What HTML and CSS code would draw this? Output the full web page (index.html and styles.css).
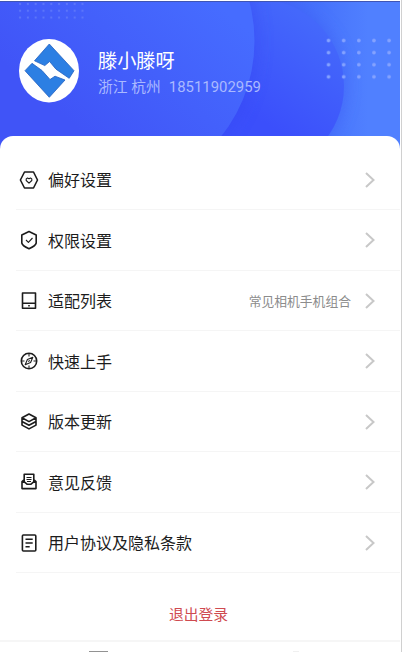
FILE: index.html
```html
<!DOCTYPE html>
<html lang="zh-CN">
<head>
<meta charset="utf-8">
<title>我的</title>
<link rel="stylesheet" href="styles.css">
</head>
<body>
<main class="app">
  <header class="profile">
    <svg class="backdrop" width="400" height="152" viewBox="0 0 400 152" aria-hidden="true">
      <defs>
        <linearGradient id="sky" x1="0" x2="1" y1="0" y2="0"><stop offset=".55" stop-color="#4059f8"/><stop offset=".78" stop-color="#4570fb"/><stop offset=".92" stop-color="#5080ff"/></linearGradient>
        <linearGradient id="c1" gradientUnits="userSpaceOnUse" x1="90" y1="140" x2="215" y2="0"><stop offset="0" stop-color="#4054f7"/><stop offset="1" stop-color="#466cff"/></linearGradient>
        <linearGradient id="c2" gradientUnits="userSpaceOnUse" x1="262" y1="120" x2="325" y2="30"><stop offset="0" stop-color="#3b4ffb"/><stop offset="1" stop-color="#4468fb"/></linearGradient>
        <pattern id="dots1" x="16.2" y="-1" width="7.8" height="6.8" patternUnits="userSpaceOnUse"><circle cx="3.9" cy="3.9" r="1.1" fill="#6079fa"/></pattern>
        <pattern id="dots2" x="321" y="33.5" width="15.15" height="12.1" patternUnits="userSpaceOnUse"><circle cx="7.5" cy="6" r="1.8" fill="#84a2ff"/></pattern>
        <filter id="soft" x="-20%" y="-20%" width="140%" height="140%"><feGaussianBlur stdDeviation="8"/></filter>
      </defs>
      <rect width="400" height="152" fill="url(#sky)"/>
      <circle cx="257" cy="85" r="88" fill="#3c5cf4" opacity=".55" filter="url(#soft)"/>
      <circle cx="257" cy="85" r="87" fill="url(#c2)"/>
      <circle cx="101" cy="40" r="156" fill="#344af2" opacity=".5" filter="url(#soft)"/>
      <circle cx="101" cy="40" r="153.500" fill="url(#c1)"/>
      <rect x="16.200" y="0" width="70.200" height="19.400" fill="url(#dots1)"/>
      <rect x="321" y="33.500" width="75.750" height="48.400" fill="url(#dots2)"/>
      <rect width="400" height="1" fill="#3f55b4"/>
    </svg>
    <svg class="avatar" width="60" height="64" viewBox="19 39 60 64" aria-hidden="true">
      <ellipse cx="49" cy="70.700" rx="30" ry="31.700" fill="#fff"/>
      <g fill="#2c7fe3" stroke="#225fc0" stroke-width=".8" stroke-linejoin="round">
        <path d="M49.300 44 74 70.700 69.200 78.300 56 69.200 49.600 61.500 44.800 65.600 34.500 60.800Z"/>
        <path d="M32 63.300 25 70.700 49.300 97.300 65 80 55 76.200 50 79.500 42 70.500Z"/>
      </g>
    </svg>
    <div class="who">
      <h1 class="name">滕小滕呀</h1>
      <p class="meta"><span>浙江 杭州</span><span class="phone">18511902959</span></p>
    </div>
  </header>

  <section class="panel">
    <ul class="menu">
      <li class="row">
        <svg class="icon" viewBox="0 0 18 18"><path d="M4.500 1h9L17.500 9l-4 8h-9L.4 9Z"/><path class="thin" d="M9 12.200 6.200 9.500V7.900L7.500 7 9 7.800 10.500 7l1.300.9v1.600Z"/></svg>
        <span class="label">偏好设置</span>
        <svg class="chevron" viewBox="0 0 10 16"><path d="M1 1 8.500 8 1 15"/></svg>
      </li>
      <li class="row">
        <svg class="icon" viewBox="0 0 18 18"><path d="M9 .5 16.200 4V12Q15.700 14.800 9 17.800 2.300 14.800 1.800 12V4Z"/><path class="thin" d="m6 9 2.400 2.300L12.500 7"/></svg>
        <span class="label">权限设置</span>
        <svg class="chevron" viewBox="0 0 10 16"><path d="M1 1 8.500 8 1 15"/></svg>
      </li>
      <li class="row">
        <svg class="icon" viewBox="0 0 18 18"><path d="M2.500 1h13v15.200h-13ZM2.500 11.300h13M8.200 13.800h1.600"/></svg>
        <span class="label">适配列表</span>
        <span class="note">常见相机手机组合</span>
        <svg class="chevron" viewBox="0 0 10 16"><path d="M1 1 8.500 8 1 15"/></svg>
      </li>
      <li class="row">
        <svg class="icon" viewBox="0 0 18 18"><circle cx="9" cy="9" r="7.700"/><path class="thin" d="M9 1.500v3M9 13.500v3M1.500 9h3M13.500 9h3M12.800 5.200 10.600 10.500 5.200 12.800 7.400 7.500ZM8.300 9.700l1.400-1.400"/></svg>
        <span class="label">快速上手</span>
        <svg class="chevron" viewBox="0 0 10 16"><path d="M1 1 8.500 8 1 15"/></svg>
      </li>
      <li class="row">
        <svg class="icon" viewBox="0 0 18 18"><path d="M9 1 16 4.800 9 8.600 2 4.800ZM2 5v3.500l7 3.800 7-3.800V5M2 8.500v3.600l7 3.800 7-3.800V8.500"/></svg>
        <span class="label">版本更新</span>
        <svg class="chevron" viewBox="0 0 10 16"><path d="M1 1 8.500 8 1 15"/></svg>
      </li>
      <li class="row">
        <svg class="icon" viewBox="0 0 18 18"><path d="M4.200 9.500V1.300h9.600v8.200M4.200 6.700 2 8.600v7h14v-7l-2.200-1.900M2 9.200h2.600L7 11.200h4l2.400-2H16"/><path class="thin" d="M6.500 4.500h5M6.500 6.500h5M7 8.500h4"/></svg>
        <span class="label">意见反馈</span>
        <svg class="chevron" viewBox="0 0 10 16"><path d="M1 1 8.500 8 1 15"/></svg>
      </li>
      <li class="row">
        <svg class="icon" viewBox="0 0 18 18"><rect x="2.400" y="1" width="13.400" height="16" rx="1"/><path d="M5.500 5.200h7.200M5.500 9h7.200M5.500 12.800h4.200"/></svg>
        <span class="label">用户协议及隐私条款</span>
        <svg class="chevron" viewBox="0 0 10 16"><path d="M1 1 8.500 8 1 15"/></svg>
      </li>
    </ul>
    <button class="logout" type="button">退出登录</button>
  </section>
  <nav class="tabbar"><i class="tab tab-main"></i><i class="tab tab-faint"></i></nav>
</main>
</body>
</html>
```
FILE: styles.css
```css
* { box-sizing: border-box; }

body {
  margin: 0;
  background: #fff;
  color: #1c1c1c;
  font-family: Roboto, "Noto Sans CJK SC", sans-serif;
}

.app {
  display: flex;
  flex-direction: column;
  width: 402px;
  height: 652px;
  overflow: hidden;
  border-right: 1px solid #d0d0d0;
  padding: 1px 1px 0 0;
}

.profile {
  position: relative;
  display: flex;
  flex: none;
  height: 152px;
  padding: 39px 0 0 19px;
  margin-bottom: -17.500px;
}

.backdrop {
  position: absolute;
  inset: 0;
}

.avatar {
  position: relative;
  flex: none;
  margin-top: -1px;
}

.who {
  position: relative;
  margin: 8px 0 0 19px;
}

.name {
  margin: 0;
  color: #fff;
  font-size: 19.2px;
  font-weight: 400;
  line-height: 27px;
}

.meta {
  display: flex;
  gap: 8px;
  margin: 0;
  color: #aab9ff;
  font-size: 14.8px;
  line-height: 24px;
  white-space: nowrap;
}

.phone { font-size: 14.900px; }

.panel {
  position: relative;
  flex: none;
  height: 504.500px;
  padding-top: 14px;
  border-radius: 13px 13px 0 0;
  background: #fff;
}

.menu {
  margin: 0;
  padding: 0 0 0 16px;
  list-style: none;
}

.row {
  display: flex;
  align-items: center;
  height: 60.500px;
  padding: 1px 25px 0 4px;
  border-bottom: 1px solid #f5f5f5;
}

.icon {
  flex: none;
  width: 18px;
  height: 18px;
  margin-right: 10px;
  overflow: visible;
  fill: none;
  stroke: #1c1c1c;
  stroke-width: 1.6;
  stroke-linejoin: round;
}

.thin { stroke-width: 1.1; }

.label {
  flex: 1;
  padding-top: 3px;
  font-size: 16px;
  line-height: 24px;
}

.note {
  margin-right: 14px;
  color: #8c8c8c;
  font-size: 12.800px;
}

.chevron {
  flex: none;
  width: 10px;
  height: 16px;
  fill: none;
  stroke: #c8c8c8;
  stroke-width: 2;
}

.logout {
  display: block;
  margin: 30px auto 0;
  padding: 0 3px 0 0;
  border: 0;
  background: none;
  color: #cf4a50;
  font: inherit;
  font-size: 14.800px;
  line-height: 24px;
}

.tabbar {
  position: relative;
  display: flex;
  flex: none;
  height: 12px;
  padding: 9px 0 0 89px;
  border-top: 2px solid #f6f6f6;
  background: #fff;
}

.tab { height: 1px; }

.tab-main {
  width: 19px;
  background: #929292;
}

.tab-faint {
  width: 6px;
  margin-left: 185px;
  background: #f0f0f0;
}
```
